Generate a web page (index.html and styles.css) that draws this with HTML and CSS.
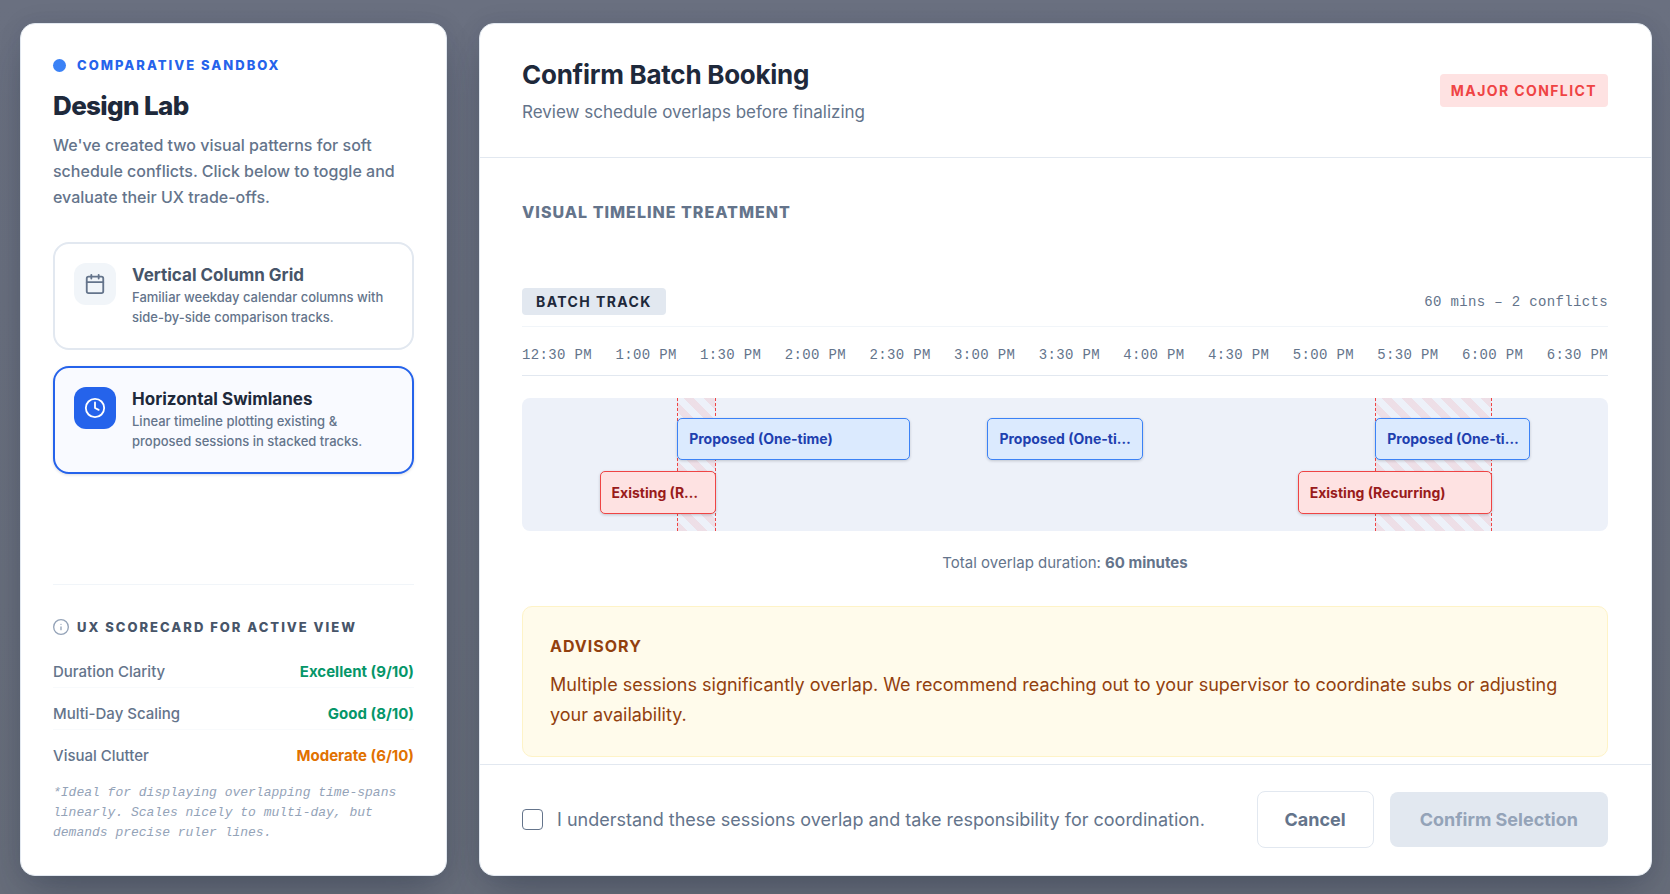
FILE: index.html
```html
<!DOCTYPE html>
<html lang="en">
<head>
<meta charset="utf-8">
<meta name="viewport" content="width=device-width, initial-scale=1">
<title>Confirm Batch Booking</title>
<link rel="stylesheet" href="styles.css">
</head>
<body>
<div class="overlay">
  <aside class="panel lab">
    <p class="eyebrow"><span class="dot"></span>Comparative Sandbox</p>
    <h2 class="lab-title">Design Lab</h2>
    <p class="lab-intro">We've created two visual patterns for soft schedule conflicts. Click below to toggle and evaluate their UX trade-offs.</p>
    <div class="options">
      <button type="button" class="option" aria-pressed="false">
        <span class="option-icon">
          <svg width="22" height="22" viewBox="0 0 24 24" fill="none" stroke="currentColor" stroke-width="2" stroke-linecap="round" stroke-linejoin="round" aria-hidden="true"><path d="M8 2v4M16 2v4M3 10h18"/><rect x="3" y="4" width="18" height="18" rx="2"/></svg>
        </span>
        <span class="option-text">
          <span class="option-name">Vertical Column Grid</span>
          <span class="option-desc">Familiar weekday calendar columns with side-by-side comparison tracks.</span>
        </span>
      </button>
      <button type="button" class="option option-active" aria-pressed="true">
        <span class="option-icon">
          <svg width="22" height="22" viewBox="0 0 24 24" fill="none" stroke="currentColor" stroke-width="2" stroke-linecap="round" stroke-linejoin="round" aria-hidden="true"><circle cx="12" cy="12" r="10"/><path d="M12 6v6l4 2"/></svg>
        </span>
        <span class="option-text">
          <span class="option-name">Horizontal Swimlanes</span>
          <span class="option-desc">Linear timeline plotting existing &amp; proposed sessions in stacked tracks.</span>
        </span>
      </button>
    </div>
    <section class="scorecard">
      <h3 class="score-title">
        <svg width="16" height="16" viewBox="0 0 24 24" fill="none" stroke="currentColor" stroke-width="2" stroke-linecap="round" stroke-linejoin="round" aria-hidden="true"><circle cx="12" cy="12" r="11"/><path d="M12 16v-4M12 8h.01"/></svg>
        UX Scorecard for Active View
      </h3>
      <dl class="scores">
        <div class="score"><dt>Duration Clarity</dt><dd class="good">Excellent (9/10)</dd></div>
        <div class="score"><dt>Multi-Day Scaling</dt><dd class="good">Good (8/10)</dd></div>
        <div class="score"><dt>Visual Clutter</dt><dd class="fair">Moderate (6/10)</dd></div>
      </dl>
      <p class="score-note">*Ideal for displaying overlapping time-spans linearly. Scales nicely to multi-day, but demands precise ruler lines.</p>
    </section>
  </aside>

  <main class="panel dialog">
    <header class="dialog-head">
      <div>
        <h1 class="dialog-title">Confirm Batch Booking</h1>
        <p class="dialog-sub">Review schedule overlaps before finalizing</p>
      </div>
      <span class="severity">Major Conflict</span>
    </header>
    <div class="dialog-body">
      <h2 class="section-title">Visual Timeline Treatment</h2>
      <div class="track-head">
        <span class="track-tag">Batch Track</span>
        <span class="track-meta">60 mins – 2 conflicts</span>
      </div>
      <div class="ruler">
        <span>12:30 PM</span><span>1:00 PM</span><span>1:30 PM</span><span>2:00 PM</span><span>2:30 PM</span><span>3:00 PM</span><span>3:30 PM</span><span>4:00 PM</span><span>4:30 PM</span><span>5:00 PM</span><span>5:30 PM</span><span>6:00 PM</span><span>6:30 PM</span>
      </div>
      <div class="lanes">
        <div class="overlap" style="grid-column: 5 / 6"></div>
        <div class="overlap" style="grid-column: 23 / 26"></div>
        <div class="session proposed" style="grid-column: 5 / 11"><span>Proposed (One-time)</span></div>
        <div class="session proposed" style="grid-column: 13 / 17"><span>Proposed (One-time)</span></div>
        <div class="session proposed" style="grid-column: 23 / 27"><span>Proposed (One-time)</span></div>
        <div class="session existing" style="grid-column: 3 / 6"><span>Existing (Recurring)</span></div>
        <div class="session existing" style="grid-column: 21 / 26"><span>Existing (Recurring)</span></div>
      </div>
      <p class="total">Total overlap duration: <strong>60 minutes</strong></p>
      <section class="advisory">
        <h3 class="advisory-title">Advisory</h3>
        <p class="advisory-text">Multiple sessions significantly overlap. We recommend reaching out to your supervisor to coordinate subs or adjusting your availability.</p>
      </section>
    </div>
    <footer class="dialog-foot">
      <label class="ack"><input type="checkbox" class="ack-box">I understand these sessions overlap and take responsibility for coordination.</label>
      <div class="actions">
        <button type="button" class="btn btn-cancel">Cancel</button>
        <button type="button" class="btn btn-confirm" disabled>Confirm Selection</button>
      </div>
    </footer>
  </main>
</div>
</body>
</html>
```
FILE: styles.css
```css
*, *::before, *::after { box-sizing: border-box; }
body, h1, h2, h3, p, dl, dd { margin: 0; }
body {
  font-family: Inter, "Liberation Sans", sans-serif;
  color: #64748b;
  background: #676d7b;
}
button, input { font: inherit; }

.overlay {
  display: flex;
  gap: 32px;
  height: 100vh;
  padding: 23px 18px 18px 20px;
  background: linear-gradient(#6a7080, #676d7a);
}
.panel {
  display: flex;
  flex-direction: column;
  background: #fff;
  border: 1px solid #e2e8f0;
  border-radius: 15px;
  box-shadow: 0 20px 40px -12px rgba(30, 41, 59, 0.4), 0 0 24px rgba(30, 41, 59, 0.08);
  overflow: hidden;
}

/* Sidebar */
.lab { flex: 0 0 427px; padding: 31px 32px 32px; }
.eyebrow {
  display: flex;
  align-items: center;
  gap: 11px;
  font-size: 13px;
  line-height: 20px;
  font-weight: 800;
  letter-spacing: 2px;
  text-transform: uppercase;
  color: #2563eb;
}
.dot { width: 13px; height: 13px; border-radius: 50%; background: #3b82f6; }
.lab-title {
  margin-top: 13px;
  font-size: 26px;
  line-height: 36px;
  font-weight: 800;
  letter-spacing: -0.025em;
  color: #1e293b;
}
.lab-intro { margin-top: 8px; font-size: 16px; line-height: 26px; font-weight: 500; }
.options { display: grid; gap: 16px; margin-top: 32px; }
.option {
  display: flex;
  align-items: flex-start;
  gap: 16px;
  min-height: 108px;
  padding: 19px;
  text-align: left;
  color: #64748b;
  background: #fff;
  border: 2px solid #e2e8f0;
  border-radius: 16px;
}
.option-active {
  background: #f9faff;
  border-color: #2563eb;
  box-shadow: 0 1px 3px rgba(15, 23, 42, 0.15);
}
.option-icon {
  display: grid;
  place-items: center;
  flex: none;
  width: 42px;
  height: 42px;
  border-radius: 12px;
  background: #f1f5f9;
}
.option-active .option-icon { color: #fff; background: #2563eb; }
.option-text { display: grid; }
.option-name { font-size: 17px; line-height: 24px; font-weight: 700; color: #475569; }
.option-active .option-name { color: #1e293b; }
.option-desc { font-size: 13px; line-height: 20px; font-weight: 500; }

.scorecard { margin-top: auto; padding-top: 32px; border-top: 1px solid #f1f5f9; }
.score-title {
  display: flex;
  align-items: center;
  gap: 8px;
  font-size: 13px;
  line-height: 20px;
  font-weight: 800;
  letter-spacing: 2px;
  text-transform: uppercase;
  color: #475569;
}
.score-title svg { color: #94a3b8; }
.scores { margin-top: 24px; display: grid; gap: 15px; }
.score {
  display: flex;
  justify-content: space-between;
  padding-bottom: 4px;
  font-size: 15px;
  line-height: 22px;
  font-weight: 500;
  border-bottom: 1px solid #f8fafc;
}
.score:last-child { border-bottom: 0; }
.score dd { font-weight: 700; }
.good { color: #059669; }
.fair { color: #e17100; }
.score-note {
  margin-top: 12px;
  font-family: "Liberation Mono", "Courier New", monospace;
  font-size: 13px;
  line-height: 20px;
  font-style: italic;
  color: #94a3b8;
}

/* Dialog */
.dialog { flex: 1; min-width: 0; }
.dialog-head {
  display: flex;
  align-items: center;
  justify-content: space-between;
  padding: 32px 43px 32px 42px;
  border-bottom: 1px solid #e2e8f0;
}
.dialog-title { font-size: 26px; line-height: 38px; font-weight: 700; letter-spacing: -0.01em; color: #1e293b; }
.dialog-sub { margin-top: 5px; font-size: 17px; line-height: 26px; }
.severity {
  padding: 6px 11px;
  font-size: 14px;
  line-height: 21px;
  font-weight: 700;
  letter-spacing: 0.1em;
  text-transform: uppercase;
  color: #ef4444;
  background: #fee2e2;
  border-radius: 4px;
}
.dialog-body { flex: 1; min-height: 0; padding: 42px 43px 0 42px; overflow: hidden; }
.section-title {
  font-size: 16px;
  line-height: 24px;
  font-weight: 800;
  letter-spacing: 1px;
  text-transform: uppercase;
}
.track-head {
  display: flex;
  align-items: center;
  justify-content: space-between;
  margin-top: 64px;
  padding-bottom: 11px;
  border-bottom: 1px solid #f1f5f9;
}
.track-tag {
  padding: 3px 14px;
  font-size: 14px;
  line-height: 21px;
  font-weight: 700;
  letter-spacing: 0.1em;
  text-transform: uppercase;
  color: #1e293b;
  background: #e2e8f0;
  border-radius: 4px;
}
.track-meta, .ruler {
  font-family: "Liberation Mono", "Courier New", monospace;
  font-size: 14px;
  line-height: 20px;
  letter-spacing: 0.025em;
}
.ruler {
  display: flex;
  justify-content: space-between;
  padding: 18px 0 10px;
  white-space: nowrap;
  border-bottom: 1px solid #e2e8f0;
}
.lanes {
  display: grid;
  grid-template-columns: repeat(28, minmax(0, 1fr));
  grid-template-rows: 42px 43px;
  row-gap: 11px;
  margin-top: 22px;
  padding: 20px 0 17px;
  background: #edf1f9;
  border-radius: 8px;
}
.overlap {
  grid-row: 1 / 3;
  margin: -20px 0 -17px;
  border: dashed #ef4444;
  border-width: 0 1px;
  background: repeating-linear-gradient(45deg, rgba(239, 68, 68, 0.1) 0 7px, transparent 7px 14px);
}
.session {
  display: flex;
  align-items: center;
  min-width: 0;
  padding: 0 11px;
  font-size: 14px;
  line-height: 20px;
  font-weight: 700;
  border: 1px solid;
  border-radius: 5px;
  box-shadow: 0 1px 3px rgba(15, 23, 42, 0.2);
}
.session span { overflow: hidden; text-overflow: ellipsis; white-space: nowrap; }
.proposed { grid-row: 1; padding-right: 8px; color: #1e40af; background: #dbeafe; border-color: #3b82f6; }
.existing { grid-row: 2; color: #991b1b; background: #fee2e2; border-color: #ef4444; }
.total { margin-top: 20px; font-size: 15px; line-height: 24px; text-align: center; }
.total strong { font-weight: 700; }
.advisory {
  margin-top: 31px;
  padding: 27px 27px 26px;
  background: #fffbeb;
  border: 1px solid #fef3c7;
  border-radius: 10px;
  color: #92400e;
}
.advisory-title {
  font-size: 16px;
  line-height: 24px;
  font-weight: 700;
  letter-spacing: 1px;
  text-transform: uppercase;
}
.advisory-text { margin-top: 12px; font-size: 18px; line-height: 30px; }
.dialog-foot {
  display: flex;
  align-items: center;
  justify-content: space-between;
  gap: 24px;
  padding: 26px 43px 27px 42px;
  border-top: 1px solid #e2e8f0;
}
.ack { display: flex; align-items: center; gap: 14px; font-size: 18px; line-height: 28px; }
.ack-box {
  appearance: none;
  flex: none;
  width: 21px;
  height: 21px;
  margin: 0;
  background: #fff;
  border: 1px solid #64748b;
  border-radius: 4px;
}
.ack-box:checked { background: #2563eb; }
.actions { display: flex; align-items: center; gap: 16px; }
.btn {
  padding: 13px 30px;
  font-size: 18px;
  line-height: 29px;
  font-weight: 700;
  border: 0;
  border-radius: 8px;
  white-space: nowrap;
}
.btn-cancel { padding: 13px 27px; color: #64748b; background: #fff; border: 1px solid #e2e8f0; }
.btn-confirm { color: #94a3b8; background: #e2e8f0; }
```
